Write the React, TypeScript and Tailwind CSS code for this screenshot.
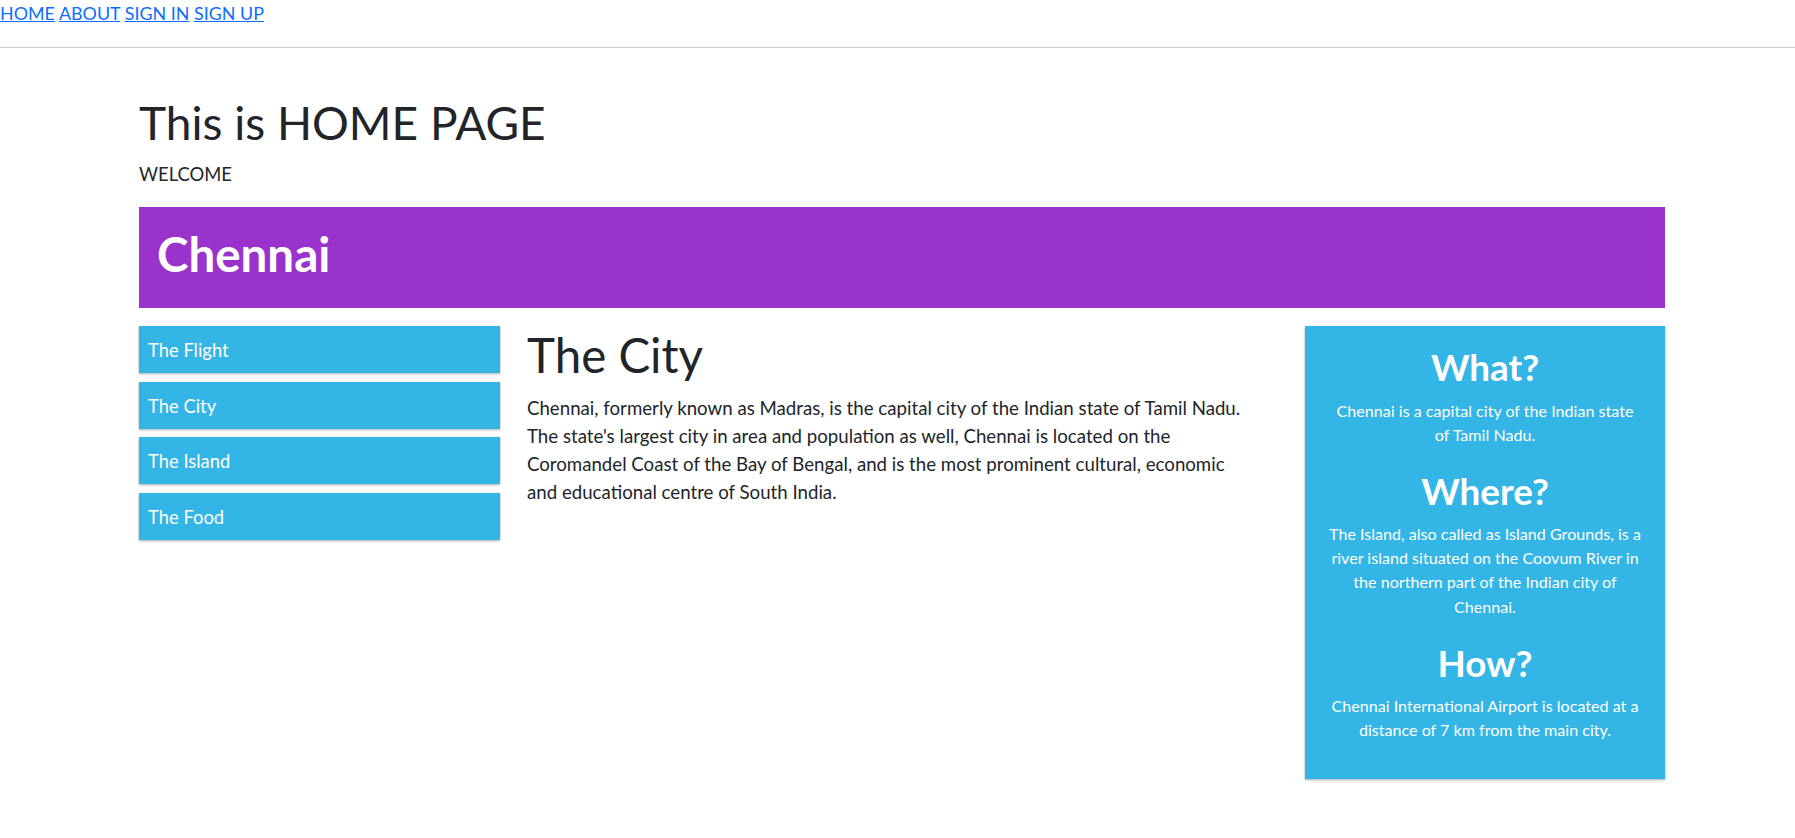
const menu = ["The Flight", "The City", "The Island", "The Food"];

const facts = [
  {
    title: "What?",
    lines: ["Chennai is a capital city of the Indian state", "of Tamil Nadu."],
  },
  {
    title: "Where?",
    lines: [
      "The Island, also called as Island Grounds, is a",
      "river island situated on the Coovum River in",
      "the northern part of the Indian city of",
      "Chennai.",
    ],
  },
  {
    title: "How?",
    lines: ["Chennai International Airport is located at a", "distance of 7 km from the main city."],
  },
];

const shadow = "shadow-[0_1px_3px_rgba(0,0,0,0.12),0_1px_2px_rgba(0,0,0,0.24)]";

export default function App() {
  return (
    <div className="min-h-screen bg-white font-['Lato',sans-serif] text-[#212529]">
      <nav className="text-[17.9px] leading-[27.6px]">
        <a href="#" className="text-[#0d6efd] underline">HOME</a>{" "}
        <a href="#" className="text-[#0d6efd] underline">ABOUT</a>{" "}
        <a href="#" className="text-[#0d6efd] underline">SIGN IN</a>{" "}
        <a href="#" className="text-[#0d6efd] underline">SIGN UP</a>
      </nav>
      <div className="mt-[19px] h-px bg-[#c8c9ca]" />

      <div className="ml-[139px] w-[1526px]">
        <h1 className="mt-[47px] text-[46px] leading-[55.2px]">This is HOME PAGE</h1>
        <p className="mt-[11px] text-[18.4px] leading-[27.6px]">WELCOME</p>

        <div className="mt-[19px] h-[101px] bg-[#9933cc] pl-[18px] pt-[18px] text-white">
          <h2 className="text-[47.5px] font-bold leading-[57px]">Chennai</h2>
        </div>

        <div className="mt-[18px] flex items-start">
          <ul className="flex w-[361px] flex-col gap-[8.5px]">
            {menu.map((m) => (
              <li
                key={m}
                className={`h-[47px] bg-[#33b5e5] px-[9px] pt-[11px] text-[18.4px] leading-[27.6px] text-white ${shadow}`}
              >
                {m}
              </li>
            ))}
          </ul>

          <div className="ml-[27px] w-[722px]">
            <h2 className="text-[47.5px] leading-[57px]">The City</h2>
            <p className="mt-[11px] text-[18.67px] leading-[28px]">
              Chennai, formerly known as Madras, is the capital city of the Indian state of Tamil Nadu. The state's
              largest city in area and population as well, Chennai is located on the Coromandel Coast of the Bay of
              Bengal, and is the most prominent cultural, economic and educational centre of South India.
            </p>
          </div>

          <aside
            className={`ml-auto w-[360px] bg-[#33b5e5] px-[14px] pt-[19px] pb-[37px] text-center text-white ${shadow}`}
          >
            {facts.map((f, i) => (
              <div key={f.title} className={i > 0 ? "mt-[22px]" : ""}>
                <h2 className="text-[36.8px] font-bold leading-[44.2px]">{f.title}</h2>
                <p className="mt-[9px] text-[16.1px] leading-[24.15px]">
                  {f.lines.map((l, j) => (
                    <span key={j}>
                      {l}
                      {j < f.lines.length - 1 && <br />}
                    </span>
                  ))}
                </p>
              </div>
            ))}
          </aside>
        </div>
      </div>
    </div>
  );
}
